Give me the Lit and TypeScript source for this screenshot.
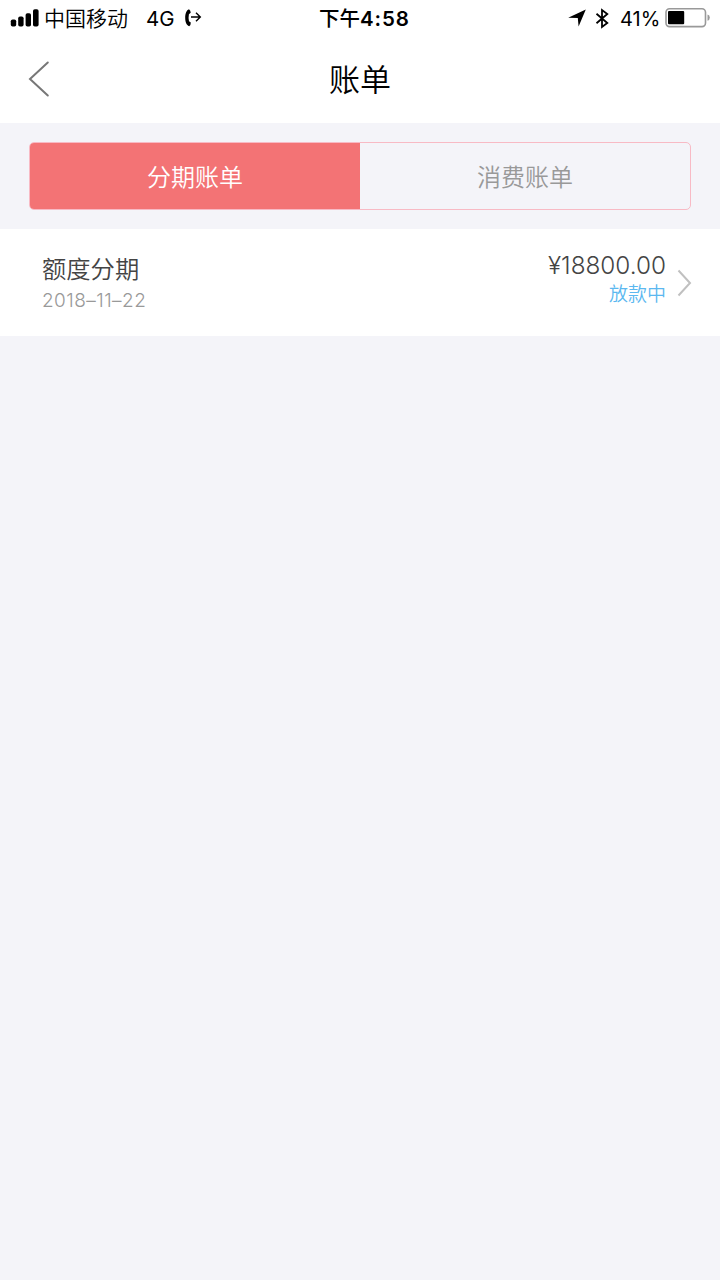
import { LitElement, html, css } from 'lit';
import { customElement, state } from 'lit/decorators.js';

@customElement('status-bar')
class StatusBar extends LitElement {
  static styles = css`
    :host { display: flex; align-items: center; height: 36px; color: #000; font-size: 21px; line-height: 36px; white-space: nowrap; }
    svg { display: block; flex: none; }
    span { flex: none; padding-top: 2px; }
    .signal { margin-left: 10px; }
    .carrier { width: 84px; margin-left: 5px; font-weight: 350; }
    .network { width: 30px; margin-left: 18px; font-size: 20.5px; }
    .forward { margin-left: 8px; }
    .time { width: 92px; margin-left: 117px; font-weight: 600; font-size: 20.5px; letter-spacing: 0.9px; }
    .time b { font-weight: 500; letter-spacing: 0; font-size: 20.5px; }
    .locate { margin-left: 157px; }
    .bluetooth { margin-left: 9px; }
    .percent { width: 41px; margin-left: 11px; font-size: 20px; }
    .battery { margin-left: 4px; }
  `;
  render() {
    return html`
      <svg class="signal" width="29" height="18" viewBox="0 0 29 18">
        <rect x="0.8" y="10.5" width="5.4" height="7" rx="1.8" /><rect x="8.2" y="7.5" width="5.4" height="10" rx="1.8" />
        <rect x="15.6" y="4.2" width="5.4" height="13.3" rx="1.8" /><rect x="23" y="0.3" width="5.6" height="17.2" rx="1.8" />
      </svg>
      <span class="carrier">中国移动</span>
      <span class="network">4G</span>
      <svg class="forward" width="18" height="18" viewBox="0 0 18 18">
        <path d="M5 .3Q6.7 1.7 6.7 3.8L4.9 5.2Q4.2 8.8 5 12.2L6.8 13.4Q7 15.5 5.2 17.2C2.5 16.3 1.2 13 1.2 8.8S2.5 1.2 5 .3Z" />
        <path d="M7 8H16.3M12 3.8 16.3 8 12 12.2" fill="none" stroke="#000" stroke-width="1.4" />
      </svg>
      <span class="time"><b>下午</b>4:58</span>
      <svg class="locate" width="18" height="18" viewBox="0 0 18 18"><path d="M17.8.5 10.6 17.5 9.8 9 .2 8.8Z" /></svg>
      <svg class="bluetooth" width="14" height="21" viewBox="0 0 14 21">
        <path d="M1.5 5.8 12.3 15 7 19V2L12.3 6 1.5 15.2" fill="none" stroke="#000" stroke-width="1.8" />
      </svg>
      <span class="percent">41%</span>
      <svg class="battery" width="46" height="20" viewBox="0 0 46 20">
        <rect x="1" y="0.8" width="39.5" height="17.8" rx="3.5" fill="none" stroke="#999" stroke-width="1.6" />
        <rect x="3" y="3" width="16.2" height="13.2" rx="1" />
        <path d="M42.5 6.4Q44.8 7 44.8 9.6T42.5 12.8Z" fill="#999" />
      </svg>
    `;
  }
}

@customElement('bill-row')
class BillRow extends LitElement {
  static styles = css`
    :host { display: flex; box-sizing: border-box; height: 107px; padding: 23px 28px 0 42px; background: #fff; }
    .main { flex: 1; }
    .name { height: 34px; line-height: 34px; font-size: 24.3px; color: #444; font-weight: 350; }
    .date { height: 30px; line-height: 30px; font-size: 19px; color: #999; font-weight: 350; letter-spacing: 0.45px; }
    .side { text-align: right; }
    .amount { height: 27px; line-height: 27px; font-size: 24.3px; color: #444; font-weight: 350; }
    .status { height: 30px; line-height: 32px; font-size: 19px; color: #5bb8f0; font-weight: 350; }
    .arrow { display: block; margin: 17px 0 0 11px; }
  `;
  render() {
    return html`
      <div class="main"><div class="name">额度分期</div><div class="date">2018–11–22</div></div>
      <div class="side"><div class="amount">¥18800.00</div><div class="status">放款中</div></div>
      <svg class="arrow" width="15" height="28" viewBox="0 0 15 28"><path d="M1.5 1.5 13 14 1.5 26.5" fill="none" stroke="#c0c0c0" stroke-width="2" /></svg>
    `;
  }
}

@customElement('app-root')
class AppRoot extends LitElement {
  static styles = css`
    :host { display: block; min-height: 1280px; background: #f4f4f9; font-family: Inter, "Noto Sans CJK SC", sans-serif; }
    .top { background: #fff; height: 123px; }
    .nav { display: grid; grid-template-columns: 60px 1fr 60px; align-items: center; height: 87px; }
    .back { display: block; margin: -2px 0 0 28px; }
    .title { text-align: center; font-size: 31px; line-height: 44px; color: #000; font-weight: 350; padding-top: 1px; }
    .tabs { display: flex; box-sizing: border-box; height: 68px; margin: 19px 29px; border: 1px solid #f8bac5; border-radius: 5px; overflow: hidden; }
    .tab { flex: 1; text-align: center; line-height: 70px; font-size: 24px; font-weight: 350; color: #999; }
    .active { background: #f37375; color: #fff; }
  `;
  @state() selected = 0;
  render() {
    return html`
      <div class="top">
        <status-bar></status-bar>
        <div class="nav">
          <svg class="back" width="22" height="36" viewBox="0 0 22 36"><path d="M19.8 1.5 2 18 19.8 34.5" fill="none" stroke="#777" stroke-width="2" stroke-linecap="round" /></svg>
          <div class="title">账单</div>
        </div>
      </div>
      <div class="tabs">
        ${['分期账单', '消费账单'].map((label, i) => html`<div class="tab ${i === this.selected ? 'active' : ''}" @click=${() => (this.selected = i)}>${label}</div>`)}
      </div>
      <bill-row></bill-row>
    `;
  }
}
